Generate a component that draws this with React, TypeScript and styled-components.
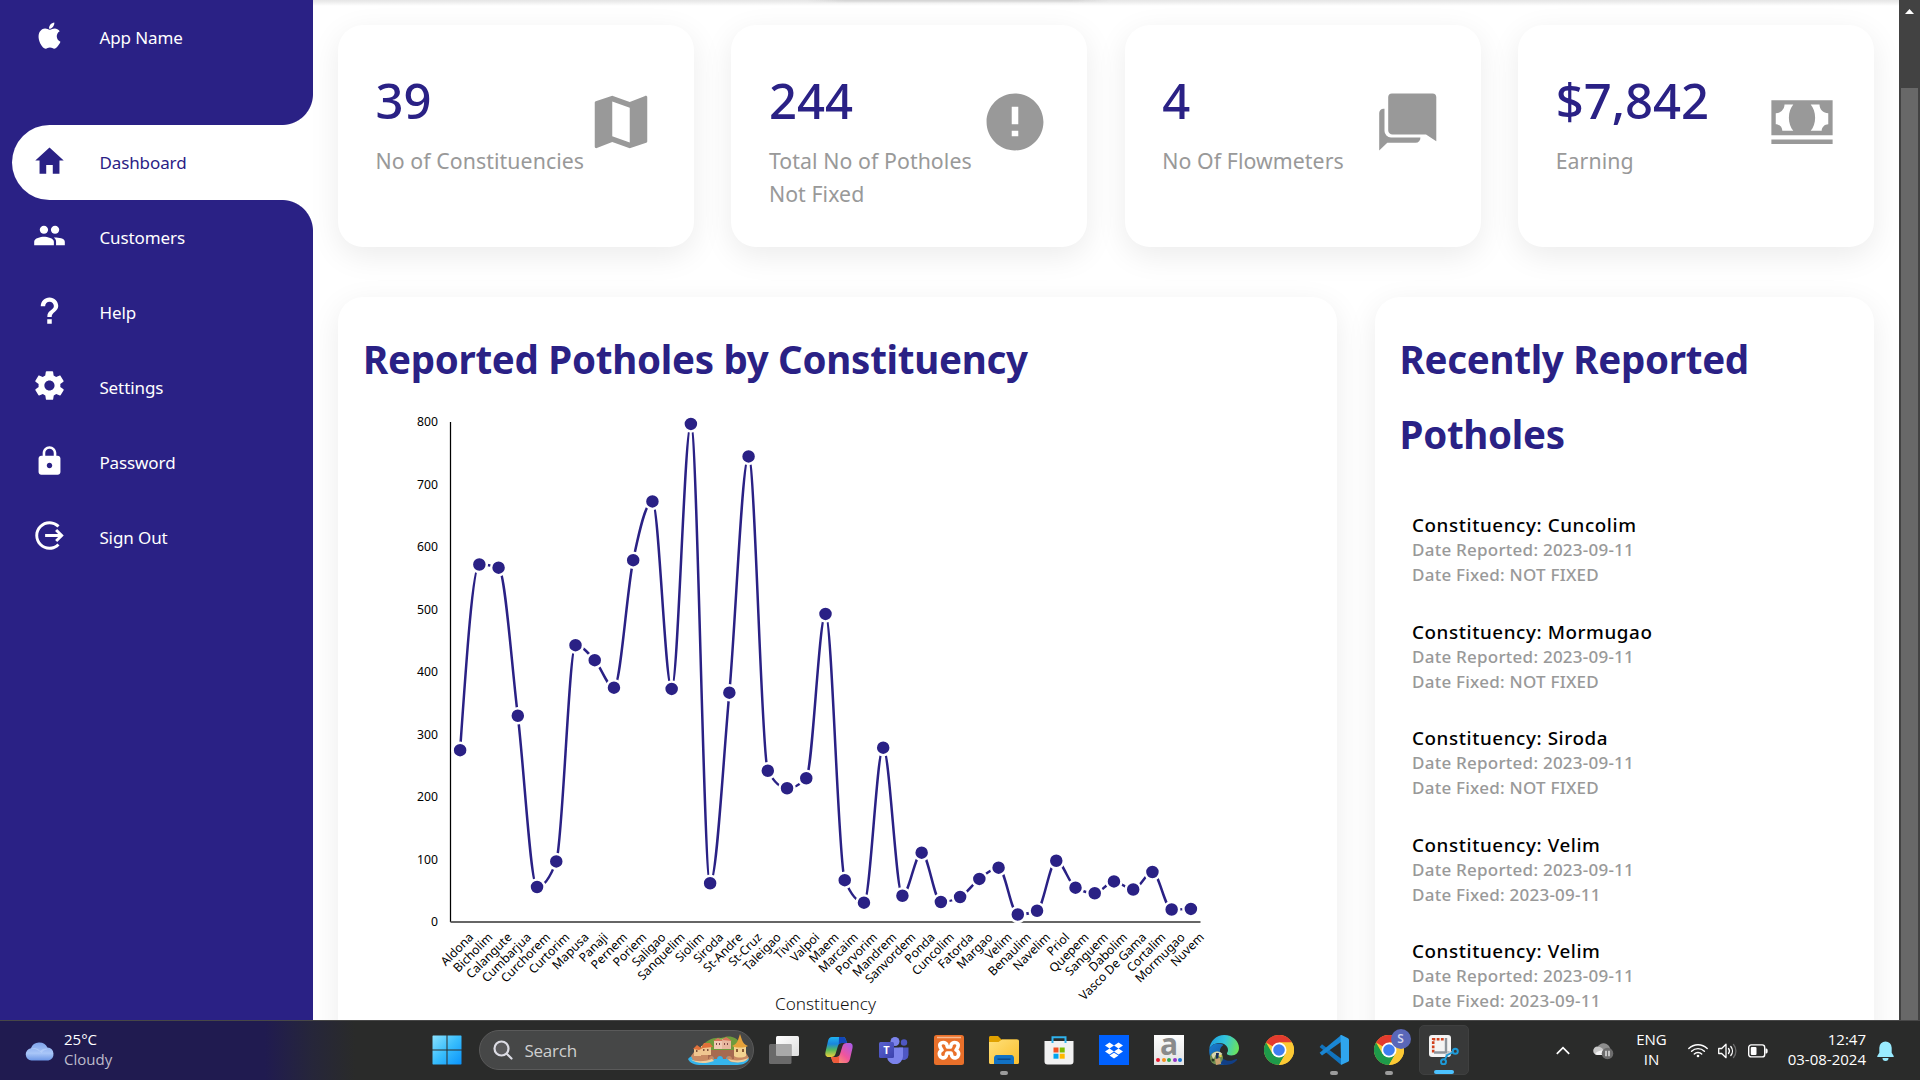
import React from "react";
import styled, { createGlobalStyle, css } from "styled-components";
import {
  IoLogoApple,
  IoMdHome,
  IoMdPeople,
  IoMdHelp,
  IoMdSettings,
  IoMdLock,
  IoMdLogOut,
  IoMdMap,
  IoMdAlert,
  IoMdCash,
} from "react-icons/io";

const BLUE = "#2a2185";
const GREY = "#999";
const APP_FONT = `"Noto Sans", "Open Sans", sans-serif`;
const SYSTEM_FONT = `"Open Sans", "Noto Sans", sans-serif`;

const GlobalStyle = createGlobalStyle`
  * { box-sizing: border-box; margin: 0; padding: 0; }
  html, body { overflow: hidden; background: #fff; }
  body { font-family: ${APP_FONT}; }
  svg { display: block; }
`;

const Screen = styled.div`
  width: 1920px;
  height: 1080px;
  display: flex;
  flex-direction: column;
  overflow: hidden;
`;

const Page = styled.div`
  height: 1020px;
  display: flex;
  overflow: hidden;
  background: #fff;
`;

/* ---------- sidebar ---------- */

const Sidebar = styled.nav`
  width: 313px;
  flex: none;
  background: ${BLUE};
  padding-left: 12px;
`;

const NavList = styled.ul`
  list-style: none;
`;

const activeItem = css`
  background: #fff;
  color: ${BLUE};
  &::before,
  &::after {
    content: "";
    position: absolute;
    right: 0;
    width: 31px;
    height: 31px;
  }
  &::before {
    top: -31px;
    background: radial-gradient(circle at 0 0, transparent 30.5px, #fff 31.5px);
  }
  &::after {
    bottom: -31px;
    background: radial-gradient(circle at 0 100%, transparent 30.5px, #fff 31.5px);
  }
`;

const NavItem = styled.li<{ $active?: boolean; $brand?: boolean }>`
  position: relative;
  height: 75px;
  display: flex;
  align-items: center;
  border-radius: 37.5px 0 0 37.5px;
  color: #fff;
  margin-bottom: ${(p) => (p.$brand ? "50px" : "0")};
  ${(p) => p.$active && activeItem}
`;

const NavIcon = styled.span`
  width: 75px;
  display: flex;
  justify-content: center;
  padding-bottom: 4px;
  font-size: 35px;
`;

const NavLabel = styled.span`
  padding-left: 12.4px;
  font-size: 17px;
  letter-spacing: -0.1px;
  white-space: nowrap;
`;

/* ---------- main area ---------- */

const Main = styled.main`
  position: relative;
  flex: 1;
  min-width: 0;
  padding: 25px;
  overflow: hidden;
  background: #fff;
`;

const ToolbarShadow = styled.div`
  position: absolute;
  top: 0;
  left: 0;
  right: 0;
  height: 6px;
  background: linear-gradient(#e6e6e6, #ececec 30%, rgba(255, 255, 255, 0));
  &::after {
    content: "";
    position: absolute;
    left: 495px;
    width: 300px;
    height: 3px;
    background: linear-gradient(90deg, transparent, #d2d2d2 12%, #d2d2d2 88%, transparent);
    mask-image: linear-gradient(#000, transparent);
  }
`;

const panel = css`
  background: #fff;
  border-radius: 25px;
  box-shadow: 0 8.75px 31.25px rgba(0, 0, 0, 0.08);
`;

const StatGrid = styled.section`
  display: grid;
  grid-template-columns: repeat(4, 1fr);
  gap: 37.5px;
`;

const StatCard = styled.article`
  ${panel}
  height: 222px;
  padding: 37.5px;
  display: flex;
  justify-content: space-between;
`;

const StatText = styled.div`
  flex: 1;
  min-width: 0;
`;

const StatValue = styled.div`
  height: 75px;
  line-height: 75px;
  font-size: 49px;
  font-weight: 550;
  color: ${BLUE};
`;

const StatLabel = styled.div`
  margin-top: 6.5px;
  font-size: 21.3px;
  line-height: 33px;
  letter-spacing: 0.07px;
  color: ${GREY};
`;

const StatIcon = styled.div`
  flex: none;
  margin-top: 24px;
  font-size: 70px;
  color: ${GREY};
`;

const DetailGrid = styled.section`
  display: grid;
  grid-template-columns: 2fr 1fr;
  gap: 37.5px;
  margin-top: 50px;
`;

const DetailCard = styled.article`
  ${panel}
  height: 780px;
  padding: 25px;
`;

const CardTitle = styled.h2`
  font-size: 38.5px;
  font-weight: 700;
  line-height: 75px;
  letter-spacing: -0.28px;
  color: ${BLUE};
  white-space: nowrap;
`;

const ReportList = styled.ul`
  list-style: none;
  display: flex;
  flex-direction: column;
  gap: 31.5px;
  padding: 40px 0 0 12.5px;
`;

const ReportName = styled.h4`
  height: 25px;
  font-size: 18.8px;
  line-height: 27px;
  font-weight: 460;
  letter-spacing: 0.6px;
  color: #000;
`;

const ReportDate = styled.p`
  font-size: 17px;
  line-height: 25px;
  font-weight: 530;
  letter-spacing: 0.24px;
  color: ${GREY};
`;

/* ---------- scrollbar ---------- */

const Scrollbar = styled.div`
  width: 21px;
  flex: none;
  background: #424242;
  display: flex;
  flex-direction: column;
  align-items: center;
`;

const ScrollUp = styled.div`
  height: 88px;
  padding-top: 9px;
`;

const ScrollThumb = styled.div`
  flex: 1;
  width: 17px;
  background: #686868;
`;

/* ---------- chart ---------- */

const SERIES: [string, number][] = [
  ["Aldona", 275], ["Bicholim", 572], ["Calangute", 567], ["Cumbarjua", 330],
  ["Curchorem", 56], ["Curtorim", 97], ["Mapusa", 443], ["Panaji", 419],
  ["Pernem", 375], ["Poriem", 579], ["Saligao", 673], ["Sanquelim", 373],
  ["Siolim", 797], ["Siroda", 62], ["St-Andre", 367], ["St-Cruz", 745],
  ["Taleigao", 242], ["Tivim", 214], ["Valpoi", 230], ["Maem", 493],
  ["Marcaim", 67], ["Porvorim", 31], ["Mandrem", 279], ["Sanvordem", 42],
  ["Ponda", 111], ["Cuncolim", 32], ["Fatorda", 40], ["Margao", 69],
  ["Velim", 87], ["Benaulim", 12], ["Navelim", 18], ["Priol", 98],
  ["Quepem", 55], ["Sanguem", 46], ["Dabolim", 65], ["Vasco De Gama", 52],
  ["Cortalim", 80], ["Mormugao", 20], ["Nuvem", 21],
];

const PLOT_W = 750;
const PLOT_H = 500;
const MAX = 800;
const band = PLOT_W / SERIES.length;
const points = SERIES.map(([, v], i) => ({
  x: band * (i + 0.5),
  y: PLOT_H - (v / MAX) * PLOT_H,
}));

/* Monotone cubic interpolation along x. */
function monotonePath(p: { x: number; y: number }[]) {
  const n = p.length;
  const slope = (i: number) => (p[i + 1].y - p[i].y) / (p[i + 1].x - p[i].x);
  const t: number[] = new Array(n).fill(0);
  for (let i = 1; i < n - 1; i++) {
    const a = slope(i - 1);
    const b = slope(i);
    t[i] =
      (Math.sign(a) + Math.sign(b)) *
      Math.min(Math.abs(a), Math.abs(b), 0.5 * Math.abs((a + b) / 2));
  }
  t[0] = (3 * slope(0) - t[1]) / 2;
  t[n - 1] = (3 * slope(n - 2) - t[n - 2]) / 2;
  let d = `M${p[0].x},${p[0].y}`;
  for (let i = 0; i < n - 1; i++) {
    const dx = (p[i + 1].x - p[i].x) / 3;
    d += `C${p[i].x + dx},${p[i].y + dx * t[i]} ${p[i + 1].x - dx},${p[i + 1].y - dx * t[i + 1]} ${p[i + 1].x},${p[i + 1].y}`;
  }
  return d;
}

const AxisText = styled.text`
  font-family: ${APP_FONT};
  font-size: 12.2px;
  font-weight: 370;
  fill: #000;
`;

const AxisTitle = styled.text`
  font-family: ${APP_FONT};
  font-size: 17.2px;
  font-weight: 280;
  fill: #111;
`;

function PotholeChart() {
  return (
    <svg width="949" height="640">
      <g transform="translate(87.5 25)">
        {[0, 100, 200, 300, 400, 500, 600, 700, 800].map((v) => (
          <AxisText key={v} x={-12.5} y={PLOT_H - (v / MAX) * PLOT_H + 4} textAnchor="end">
            {v}
          </AxisText>
        ))}
        <path d={`M0,0V${PLOT_H}`} stroke="#000" strokeWidth="1.25" />
        <path d={`M0,${PLOT_H}H${PLOT_W}`} stroke="#666" strokeWidth="2" />
        <path d={monotonePath(points)} fill="none" stroke={BLUE} strokeWidth="2.5" />
        {points.map((p, i) => (
          <circle key={i} cx={p.x} cy={p.y} r="7.5" fill={BLUE} stroke="#fff" strokeWidth="2.5" />
        ))}
        {SERIES.map(([name], i) => (
          <AxisText
            key={i}
            textAnchor="end"
            transform={`translate(${points[i].x + 14} ${PLOT_H + 16}) rotate(-45)`}
          >
            {name}
          </AxisText>
        ))}
        <AxisTitle x={PLOT_W / 2} y={PLOT_H + 88} textAnchor="middle">
          Constituency
        </AxisTitle>
      </g>
    </svg>
  );
}

const ChatsIcon = () => (
  <svg width="1em" height="1em" viewBox="0 0 70 70" fill="currentColor">
    <path d="M19 6.500H59.500a3.800 3.800 0 0 1 3.800 3.800V54.300L53 47.600H19.500a4.300 4.300 0 0 1-4.300-4.300V10.300A3.800 3.800 0 0 1 19 6.500z" />
    <path d="M10.500 21.700H11.500V44a6.500 6.500 0 0 0 6.500 6.500H47.400a4.800 4.800 0 0 1-4.800 5.200H14.300L6.200 63.500V26a4.300 4.300 0 0 1 4.300-4.300z" />
  </svg>
);

/* ---------- taskbar ---------- */

const Taskbar = styled.footer`
  height: 60px;
  display: flex;
  align-items: stretch;
  border-top: 1px solid #474747;
  background: linear-gradient(90deg, #201b50 0, #201b50 265px, #26263a 312px, #2a2b2a 355px);
  font-family: ${SYSTEM_FONT};
  color: #fff;
`;

const Weather = styled.div`
  width: 419.5px;
  padding-left: 25px;
  display: flex;
  align-items: center;
  gap: 9px;
`;

const Lines = styled.div<{ $align?: string }>`
  display: flex;
  flex-direction: column;
  padding-bottom: 3px;
  text-align: ${(p) => p.$align || "left"};
  font-size: 15px;
  line-height: 20px;
  white-space: nowrap;
`;

const Muted = styled.span`
  color: #bdbbcb;
`;

const Slot = styled.div<{ $selected?: boolean }>`
  position: relative;
  width: 55px;
  flex: none;
  display: flex;
  align-items: center;
  justify-content: center;
  padding-bottom: 1px;
  ${(p) =>
    p.$selected &&
    css`
      width: 50px;
      margin: 4px 2.5px 5px;
      padding: 0;
      border-radius: 5px;
      background: #383939;
      border: 1px solid #3f4040;
    `}
`;

const Indicator = styled.i<{ $active?: boolean }>`
  position: absolute;
  bottom: ${(p) => (p.$active ? 0 : 5)}px;
  left: 50%;
  width: ${(p) => (p.$active ? 20 : 8)}px;
  height: 4px;
  margin-left: ${(p) => (p.$active ? -10 : -4)}px;
  border-radius: 2px;
  background: ${(p) => (p.$active ? "#4cc2ff" : "#9c9c9c")};
`;

const Badge = styled.span`
  position: absolute;
  top: 8px;
  left: 29px;
  width: 20px;
  height: 20px;
  border-radius: 50%;
  background: #5a67b8;
  color: #d5d9f0;
  font: 600 12px/20px ${SYSTEM_FONT};
  text-align: center;
`;

const SearchBox = styled.div`
  width: 275px;
  height: 40px;
  margin: 9px 2.5px 0 4.5px;
  padding: 0 3px 0 13px;
  display: flex;
  align-items: center;
  border-radius: 20px;
  border: 1px solid #5a5a5a;
  background: #464747;
`;

const SearchText = styled.span`
  flex: 1;
  padding-left: 11.5px;
  font-size: 17px;
  letter-spacing: -0.25px;
  color: #cfcfcf;
`;

const Tray = styled.div`
  flex: 1;
  display: flex;
  align-items: center;
  justify-content: flex-end;
  padding-right: 26px;
`;

const TrayItem = styled.div<{ $gap: number }>`
  margin-left: ${(p) => p.$gap}px;
`;

const CloudIcon = () => (
  <svg width="30" height="20" viewBox="0 0 30 20">
    <defs>
      <linearGradient id="cloud" x1="0" y1="0" x2="0" y2="1">
        <stop offset="0" stopColor="#7fa3ea" />
        <stop offset=".6" stopColor="#a9c6f8" />
        <stop offset="1" stopColor="#6d97e6" />
      </linearGradient>
    </defs>
    <path d="M6.500 19.500a6.200 6.200 0 0 1-.6-12.300A9 9 0 0 1 22.400 6.500a6.600 6.600 0 0 1 1 13z" fill="url(#cloud)" />
    <path d="M5 8c4-2 8-1 10 2 3-3 7-3 9.500-2-3 0-6 1-8 4-3-3-7-5-11.500-4z" fill="#bcd3fb" opacity=".6" />
  </svg>
);

const WindowsIcon = () => (
  <svg width="30" height="30" viewBox="0 0 30 30">
    <defs>
      <linearGradient id="win" x1="0" y1="0" x2="1" y2="1">
        <stop offset="0" stopColor="#8ae2ff" />
        <stop offset=".5" stopColor="#38bdfc" />
        <stop offset="1" stopColor="#0a93fb" />
      </linearGradient>
    </defs>
    <path d="M1 .5h13.500V14.500H.5V1zM15.500.5H29l.5.5v13.500h-14zM.5 15.500h14v14H1l-.5-.5zM15.500 15.500h14V29l-.5.5H15.500z" fill="url(#win)" />
  </svg>
);

const SearchIcon = () => (
  <svg width="20" height="20" viewBox="0 0 20 20" fill="none" stroke="#dcdce4" strokeWidth="2.200" strokeLinecap="round">
    <circle cx="8.500" cy="8.500" r="7" fill="#5a5a5c" />
    <path d="M13.700 13.700L18.500 18.500" />
  </svg>
);

const TownIcon = () => (
  <svg width="62" height="32" viewBox="0 0 62 32">
    <path d="M12 14C18 6 26 3 33 4c8-3 15-2 20 6l-4 10H14z" fill="#6f9b3c" />
    <path d="M26 8c4-5 10-4 14-1l-3 5H28z" fill="#8db84f" />
    <path d="M0 25c4-5 10-6 18-5h30c7-1 12 1 13 5-2 5-8 6-14 6H14C6 31 2 29 0 25z" fill="#35b5ec" />
    <path d="M3 22l3-4h18l2 8c-7 2-16 3-21 0z" fill="#c98a63" />
    <path d="M38 24l6-5h14l3 5c-4 4-12 5-18 4z" fill="#c98a63" />
    <path d="M2 25c6 3 14 3 22 0l2 2c-8 3-18 3-24-2zM40 25c6 2 14 2 20-1-1 4-10 6-18 3z" fill="#ecd0a0" />
    <path d="M20 16h26v9h-2c0-4-6-4-6 0h-3c0-4-6-4-6 0h-3c0-4-5-4-5 0h-1z" fill="#a76a50" />
    <path d="M26 7h8v8h-8z" fill="#f0c9b4" />
    <path d="M34 5l5-1 4 3v8h-9z" fill="#e7b79e" />
    <path d="M25 7l5-3 5 3zM34 6l4-3 6 4z" fill="#d9735a" />
    <path d="M28 9h1v2h-1zM31 9h1v2h-1zM36 9h1v2h-1zM39 9h1v2h-1z" fill="#7e4a48" />
    <path d="M6 14h7v8H6zM13 12h10v9H13z" fill="#f0c690" />
    <path d="M5 15l4-4 4 3 3-5h6l3 4-10 1-4 2z" fill="#e0713a" />
    <path d="M8 16h1.500v2H8zM15 15h1.500v2H15zM19 15h1.500v2H19z" fill="#81503a" />
    <path d="M46 12h12v10c-3 2-9 2-12 0z" fill="#f3d391" />
    <path d="M44 12c3-1 5-3 6-6l2-6 2 6c1 3 3 5 6 6-4 2-12 2-16 0z" fill="#e6a23a" />
    <path d="M48 15h2v3h-2zM54 15h2v3h-2z" fill="#8a5a34" />
  </svg>
);

const TaskViewIcon = () => (
  <svg width="30" height="30" viewBox="0 0 30 30">
    <defs>
      <linearGradient id="tv" x1="0" y1="0" x2="1" y2="1">
        <stop offset="0" stopColor="#fff" />
        <stop offset="1" stopColor="#dedede" />
      </linearGradient>
    </defs>
    <rect x="7" y="1" width="23" height="20" rx="1.500" fill="url(#tv)" />
    <rect x="0" y="9" width="22.500" height="20" rx="1.500" fill="#7a7a7a" opacity=".8" />
    <path d="M7 9h15.500v12H8.500a1.500 1.500 0 0 1-1.500-1.500z" fill="#a9a9a9" />
  </svg>
);

const CopilotIcon = () => (
  <svg width="28" height="26" viewBox="0 0 28 26">
    <defs>
      <linearGradient id="cpA" x1="0" y1="0" x2="0" y2="1">
        <stop offset="0" stopColor="#1fb3f2" />
        <stop offset=".35" stopColor="#1a86dd" />
        <stop offset=".65" stopColor="#57b95a" />
        <stop offset="1" stopColor="#f0cf3c" />
      </linearGradient>
      <linearGradient id="cpB" x1="1" y1="0" x2="0" y2="1">
        <stop offset="0" stopColor="#a35cf0" />
        <stop offset=".5" stopColor="#f0559c" />
        <stop offset="1" stopColor="#ffb25a" />
      </linearGradient>
    </defs>
    <path d="M7 0h11c2 0 2.500 1.500 3 3l1 3h-5c-2.500 0-3.500 1-4.200 3.500L10.500 17C9.800 19 8.500 20 6.500 20H3.500C.5 20 0 17.500.5 15L3 4c.6-2.500 2-4 4-4z" fill="url(#cpA)" />
    <path d="M14 0h4c2 0 2.500 1.500 3 3l1 3h-5c-1.500 0-2.500.6-3.200 1.600z" fill="#1246b8" />
    <path d="M21 26H10c-2 0-2.500-1.500-3-3l-1-3h5c2.500 0 3.500-1 4.200-3.500L17.500 9c.7-2 2-3 4-3h3c3 0 3.500 2.500 3 5L25 22c-.6 2.500-2 4-4 4z" fill="url(#cpB)" />
    <path d="M14 26h-4c-2 0-2.500-1.500-3-3l-1-3h5c1.500 0 2.500-.6 3.200-1.600z" fill="#ee5a3a" />
  </svg>
);

const TeamsGlyph = styled.div`
  position: relative;
  width: 30px;
  height: 27px;
`;

const TeamsLetter = styled.span`
  position: absolute;
  left: 0;
  top: 5px;
  width: 15px;
  height: 16px;
  border-radius: 1.5px;
  background: linear-gradient(135deg, #5a62d0, #3b42ad);
  color: #fff;
  font: 700 11px/16px ${SYSTEM_FONT};
  text-align: center;
`;

const TeamsIcon = () => (
  <TeamsGlyph>
    <svg width="30" height="27" viewBox="0 0 30 27">
      <circle cx="25" cy="5.500" r="3.200" fill="#4e57c4" />
      <path d="M20 10.500h9.500v7.500a5 5 0 0 1-8 4z" fill="#4e57c4" />
      <circle cx="16" cy="4.500" r="4.500" fill="#7b83eb" />
      <path d="M8 10.500h16V19a8 8 0 0 1-16 .5z" fill="#7b83eb" />
    </svg>
    <TeamsLetter>T</TeamsLetter>
  </TeamsGlyph>
);

const XamppIcon = () => (
  <svg width="30" height="30" viewBox="0 0 30 30">
    <rect width="30" height="30" rx="2.500" fill="#e9702a" />
    <path d="M3 2.500h24" stroke="#f6b890" strokeWidth="1.500" />
    <path
      d="M12 8.500c-3-2-7-.5-6 3 .4 1.700 1.500 2.500 2 3.500-2 1-3 3-2.500 5 .7 3 4 3.500 6 2 1.500-1 .5-3 1.500-4h4c1 1 0 3 1.500 4 2 1.500 5.300 1 6-2 .5-2-.5-4-2.500-5 .5-1 1.600-1.800 2-3.500 1-3.500-3-5-6-3-1.500 1-.5 2.500-1.500 3.500h-3c-1-1 0-2.500-1.500-3.500z"
      fill="none"
      stroke="#fff"
      strokeWidth="3.600"
      strokeLinejoin="round"
    />
  </svg>
);

const ExplorerIcon = () => (
  <svg width="30" height="28" viewBox="0 0 30 28">
    <defs>
      <linearGradient id="fold" x1="0" y1="0" x2="1" y2="1">
        <stop offset="0" stopColor="#ffe07a" />
        <stop offset="1" stopColor="#fbbf2d" />
      </linearGradient>
    </defs>
    <path d="M0 1.500C0 .6.600 0 1.500 0H9l3.500 3.500H28V10H0z" fill="#e0a100" />
    <path d="M0 6h9.500L13 3.500h15.500c.9 0 1.500.6 1.500 1.500v21.500c0 .9-.6 1.500-1.500 1.500h-27C.6 28 0 27.400 0 26.500z" fill="url(#fold)" />
    <path d="M5 28v-6c0-1.500 1-3 2.500-3h15c1.500 0 2.500 1.500 2.500 3v6z" fill="#1272c4" />
    <path d="M8.500 23.200h13" stroke="#0a4b8e" strokeWidth="1.500" />
  </svg>
);

const StoreIcon = () => (
  <svg width="30" height="30" viewBox="0 0 30 30">
    <path d="M8.500 8V2.200h13V8" fill="none" stroke="#2fb2ec" strokeWidth="2" />
    <path d="M.5 6h29v20.500a3 3 0 0 1-3 3h-23a3 3 0 0 1-3-3z" fill="#f1f1f1" />
    <path d="M9.500 12.500h5v5h-5z" fill="#f25022" />
    <path d="M15.700 12.500h5v5h-5z" fill="#7fba00" />
    <path d="M9.500 18.700h5v5h-5z" fill="#00a4ef" />
    <path d="M15.700 18.700h5v5h-5z" fill="#ffb900" />
    <path d="M8.500 6v2M21.500 6v2" stroke="#2fb2ec" strokeWidth="2" />
  </svg>
);

const DropboxIcon = () => (
  <svg width="30" height="30" viewBox="0 0 30 30">
    <path fill="#0061ff" d="M0 0h30v30H0z" />
    <path
      fill="#fff"
      d="M10.500 7.500l4.500 3-4.500 3-4.500-3zM19.500 7.500l4.500 3-4.500 3-4.500-3zM10.500 13.500l4.500 3-4.500 3-4.500-3zM19.500 13.500l4.500 3-4.500 3-4.500-3zM15 17.800l4.500 2.800-4.500 2.900-4.500-2.900z"
    />
  </svg>
);

const LetterTile = styled.div`
  width: 30px;
  height: 30px;
  background: linear-gradient(#fdfdfd, #e2e2e2);
  color: #8a8a8a;
  font: 700 30px/18px ${SYSTEM_FONT};
  text-align: center;
`;

const DotRow = styled.div`
  display: flex;
  justify-content: space-between;
  padding: 5px 2px 0;
`;

const Dot = styled.i<{ $color: string }>`
  width: 4px;
  height: 4px;
  border-radius: 50%;
  background: ${(p) => p.$color};
`;

const AIcon = () => (
  <LetterTile>
    a
    <DotRow>
      {["#e8162c", "#f5921e", "#2fa84f", "#9232c8", "#1a78d6"].map((c) => (
        <Dot key={c} $color={c} />
      ))}
    </DotRow>
  </LetterTile>
);

const EdgeIcon = () => (
  <svg width="30" height="30" viewBox="0 0 30 30">
    <defs>
      <linearGradient id="edA" x1="0" y1=".3" x2="1" y2=".5">
        <stop offset="0" stopColor="#1d9fe0" />
        <stop offset=".5" stopColor="#33c4dc" />
        <stop offset="1" stopColor="#6be35c" />
      </linearGradient>
      <linearGradient id="edB" x1="0" y1="0" x2="1" y2="1">
        <stop offset="0" stopColor="#1b7fd0" />
        <stop offset="1" stopColor="#0c4a94" />
      </linearGradient>
    </defs>
    <path d="M.3 14C1 6 7.500 0 15.200 0 24 0 30 6.500 30 13c0 4.500-3.200 7.500-7.500 7.500-3.500 0-5-1.300-4.500-2.500 1.500-1.500 1.500-5-1-7.500C12 6 3 8 .3 14z" fill="url(#edA)" />
    <path d="M.3 14C2.500 8.500 10 7 14.500 10c-3 1.500-4 5-3.500 8 .8 5 5 9.500 11 9-7 5-15.500 3.500-19.500-3C.3 20.500 0 17 .3 14z" fill="url(#edB)" />
    <path d="M11 18c.8 5.500 6.500 9 12 7.500 2-.5 3.500-1.500 4.500-1.500.8 0 .8.700.3 1.300C24 29.700 17 31.500 12 28.500z" fill="#113f86" />
    <circle cx="7.500" cy="23" r="6.500" fill="#6f8f52" />
    <path d="M2.500 20c2-4 8-5 11-1l-3 2-4-1-2 5z" fill="#d8d6b0" />
    <path d="M7 18h3l-1 6h-2z" fill="#1b2e5a" />
    <path d="M6 24l5-1 1 6-5 1z" fill="#c9a270" />
    <circle cx="4" cy="25" r="1.500" fill="#263b1e" />
    <circle cx="11.500" cy="21" r="1.300" fill="#e7cf4a" />
  </svg>
);

const ChromeIcon = () => (
  <svg width="30" height="30" viewBox="0 0 30 30">
    <circle cx="15" cy="15" r="15" fill="#fcc934" />
    <path d="M15 15L2 7.500A15 15 0 0 1 28 7.500H15z" fill="#e33b2e" />
    <path d="M2 7.500A15 15 0 0 0 15 30l6.500-11.200L8.500 18.700z" fill="#1e9a4a" />
    <path d="M28 7.500H15l6.500 11.300L15 30A15 15 0 0 0 28 7.500z" fill="#fcc934" />
    <circle cx="15" cy="15" r="7.500" fill="#fff" />
    <circle cx="15" cy="15" r="5.800" fill="#3f7ef0" />
  </svg>
);

const VSCodeIcon = () => (
  <svg width="30" height="30" viewBox="0 0 30 30">
    <path d="M.6 12L3 9.300 8.500 13.500 22 23.500v6.200z" fill="#1173bd" />
    <path d="M.6 17.800L3 20.600 22 7V.3z" fill="#1a86d3" />
    <path d="M21.500 0h1L29 3.200c.6.300 1 .9 1 1.600v20.400c0 .7-.4 1.300-1 1.600L22 30z" fill="#2fa5ee" />
  </svg>
);

const SnipIcon = () => (
  <svg width="30" height="30" viewBox="0 0 30 30">
    <rect x="0" y="0" width="22" height="22" rx="3" fill="#f4f4f4" />
    <path d="M4.200 17.500V4.200H16" fill="none" stroke="#d0401c" strokeWidth="2.600" strokeDasharray="2.800 1.400" />
    <path d="M17 3v16M5 17.500h15" stroke="#8d949b" strokeWidth="2.400" />
    <path d="M17.500 18v4M18 17.500h5" stroke="#c3c8cc" strokeWidth="2.600" />
    <circle cx="26.300" cy="16.300" r="2.500" fill="none" stroke="#1d9ad8" strokeWidth="2" />
    <circle cx="14.500" cy="26.800" r="2.500" fill="none" stroke="#1d9ad8" strokeWidth="2" />
    <path d="M18.500 20l5.500-2.700M18.500 19.500L15.800 24.500" stroke="#1d9ad8" strokeWidth="1.800" />
  </svg>
);

const OneDriveIcon = () => (
  <svg width="21" height="18" viewBox="0 0 21 18">
    <path d="M5 4.500A6.500 6.500 0 0 1 16 4l3 6H7z" fill="#8d8d8d" />
    <path d="M4.500 13a4.300 4.300 0 0 1 0-8.600C8 4.500 10 7 12 9l-3 4z" fill="#c9c9c9" />
    <path d="M2 12C4 9 8 8 12 8l4 5H4z" fill="#f2f2f2" />
    <circle cx="14.500" cy="11.500" r="5.800" fill="#6c6c6c" />
    <path d="M13 8.800v5.400M16 8.800v5.400" stroke="#fff" strokeWidth="1.200" />
  </svg>
);

const WifiIcon = () => (
  <svg width="20" height="15" viewBox="0 0 20 15" fill="none" stroke="#fff" strokeWidth="1.400" strokeLinecap="round">
    <path d="M.8 5.500a13 13 0 0 1 18.400 0M3.600 8.300a9 9 0 0 1 12.800 0M6.300 11a5.200 5.200 0 0 1 7.400 0" />
    <circle cx="10" cy="13" r="1.300" fill="#fff" stroke="none" />
  </svg>
);

const SpeakerIcon = () => (
  <svg width="20" height="16" viewBox="0 0 20 16" fill="none" stroke="#fff" strokeWidth="1.300" strokeLinecap="round" strokeLinejoin="round">
    <path d="M.7 5.500h3L8 1.300v13.400l-4.300-4.200h-3z" />
    <path d="M10.500 5.500a4 4 0 0 1 0 5M12.800 3.500a7 7 0 0 1 0 9" />
    <path d="M15.500 1.500a10 10 0 0 1 0 13" stroke="#6b6b6b" />
  </svg>
);

const BatteryIcon = () => (
  <svg width="20" height="14" viewBox="0 0 20 14">
    <rect x=".7" y=".9" width="16" height="12" rx="2.500" fill="none" stroke="#fff" strokeWidth="1.400" />
    <rect x="2.800" y="3" width="5.700" height="8" rx="1" fill="#fff" />
    <path d="M17.500 4.500c1.500 0 2.200.6 2.200 2.500s-.7 2.500-2.200 2.500z" fill="#fff" />
  </svg>
);

const BellIcon = () => (
  <svg width="17" height="20" viewBox="0 0 17 20">
    <path d="M8.500.5A6.200 6.200 0 0 0 2.300 6.700v5L.3 15c-.2.500 0 1 .6 1h15.200c.6 0 .8-.5.6-1l-2-3.300v-5A6.200 6.200 0 0 0 8.500.5z" fill="#99ebff" />
    <path d="M5.500 17h6a3 3 0 0 1-6 0z" fill="#99ebff" />
  </svg>
);

const ChevronIcon = () => (
  <svg width="14" height="9" viewBox="0 0 14 9" fill="none" stroke="#fff" strokeWidth="1.700">
    <path d="M.8 7.800L7 1.600l6.200 6.200" />
  </svg>
);

/* ---------- content ---------- */

const NAV = [
  { label: "App Name", Icon: IoLogoApple, brand: true },
  { label: "Dashboard", Icon: IoMdHome, active: true },
  { label: "Customers", Icon: IoMdPeople },
  { label: "Help", Icon: IoMdHelp },
  { label: "Settings", Icon: IoMdSettings },
  { label: "Password", Icon: IoMdLock },
  { label: "Sign Out", Icon: IoMdLogOut },
];

const STATS = [
  { value: "39", label: "No of Constituencies", Icon: IoMdMap },
  { value: "244", label: "Total No of Potholes Not Fixed", Icon: IoMdAlert },
  { value: "4", label: "No Of Flowmeters", Icon: ChatsIcon },
  { value: "$7,842", label: "Earning", Icon: IoMdCash },
];

const REPORTS = [
  ["Cuncolim", "2023-09-11", "NOT FIXED"],
  ["Mormugao", "2023-09-11", "NOT FIXED"],
  ["Siroda", "2023-09-11", "NOT FIXED"],
  ["Velim", "2023-09-11", "2023-09-11"],
  ["Velim", "2023-09-11", "2023-09-11"],
];

export default function App() {
  return (
    <Screen>
      <GlobalStyle />
      <Page>
        <Sidebar>
          <NavList>
            {NAV.map(({ label, Icon, active, brand }) => (
              <NavItem key={label} $active={active} $brand={brand}>
                <NavIcon>
                  <Icon />
                </NavIcon>
                <NavLabel>{label}</NavLabel>
              </NavItem>
            ))}
          </NavList>
        </Sidebar>
        <Main>
          <ToolbarShadow />
          <StatGrid>
            {STATS.map(({ value, label, Icon }) => (
              <StatCard key={label}>
                <StatText>
                  <StatValue>{value}</StatValue>
                  <StatLabel>{label}</StatLabel>
                </StatText>
                <StatIcon>
                  <Icon />
                </StatIcon>
              </StatCard>
            ))}
          </StatGrid>
          <DetailGrid>
            <DetailCard>
              <CardTitle>Reported Potholes by Constituency</CardTitle>
              <PotholeChart />
            </DetailCard>
            <DetailCard>
              <CardTitle>
                Recently Reported
                <br />
                Potholes
              </CardTitle>
              <ReportList>
                {REPORTS.map(([name, reported, fixed], i) => (
                  <li key={i}>
                    <ReportName>Constituency: {name}</ReportName>
                    <ReportDate>Date Reported: {reported}</ReportDate>
                    <ReportDate>Date Fixed: {fixed}</ReportDate>
                  </li>
                ))}
              </ReportList>
            </DetailCard>
          </DetailGrid>
        </Main>
        <Scrollbar>
          <ScrollUp>
            <svg width="9" height="5" viewBox="0 0 9 5">
              <path d="M4.500 0L9 5H0z" fill="#fff" />
            </svg>
          </ScrollUp>
          <ScrollThumb />
        </Scrollbar>
      </Page>
      <Taskbar>
        <Weather>
          <CloudIcon />
          <Lines>
            <span>25°C</span>
            <Muted>Cloudy</Muted>
          </Lines>
        </Weather>
        <Slot><WindowsIcon /></Slot>
        <SearchBox>
          <SearchIcon />
          <SearchText>Search</SearchText>
          <TownIcon />
        </SearchBox>
        <Slot><TaskViewIcon /></Slot>
        <Slot><CopilotIcon /></Slot>
        <Slot><TeamsIcon /></Slot>
        <Slot><XamppIcon /></Slot>
        <Slot><ExplorerIcon /><Indicator /></Slot>
        <Slot><StoreIcon /></Slot>
        <Slot><DropboxIcon /></Slot>
        <Slot><AIcon /></Slot>
        <Slot><EdgeIcon /></Slot>
        <Slot><ChromeIcon /></Slot>
        <Slot><VSCodeIcon /><Indicator /></Slot>
        <Slot><ChromeIcon /><Badge>S</Badge><Indicator /></Slot>
        <Slot $selected><SnipIcon /><Indicator $active /></Slot>
        <Tray>
          <ChevronIcon />
          <TrayItem $gap={23}><OneDriveIcon /></TrayItem>
          <TrayItem $gap={22}>
            <Lines $align="center"><span>ENG</span><span>IN</span></Lines>
          </TrayItem>
          <TrayItem $gap={21}><WifiIcon /></TrayItem>
          <TrayItem $gap={10}><SpeakerIcon /></TrayItem>
          <TrayItem $gap={10}><BatteryIcon /></TrayItem>
          <TrayItem $gap={20}>
            <Lines $align="right"><span>12:47</span><span>03-08-2024</span></Lines>
          </TrayItem>
          <TrayItem $gap={11}><BellIcon /></TrayItem>
        </Tray>
      </Taskbar>
    </Screen>
  );
}
